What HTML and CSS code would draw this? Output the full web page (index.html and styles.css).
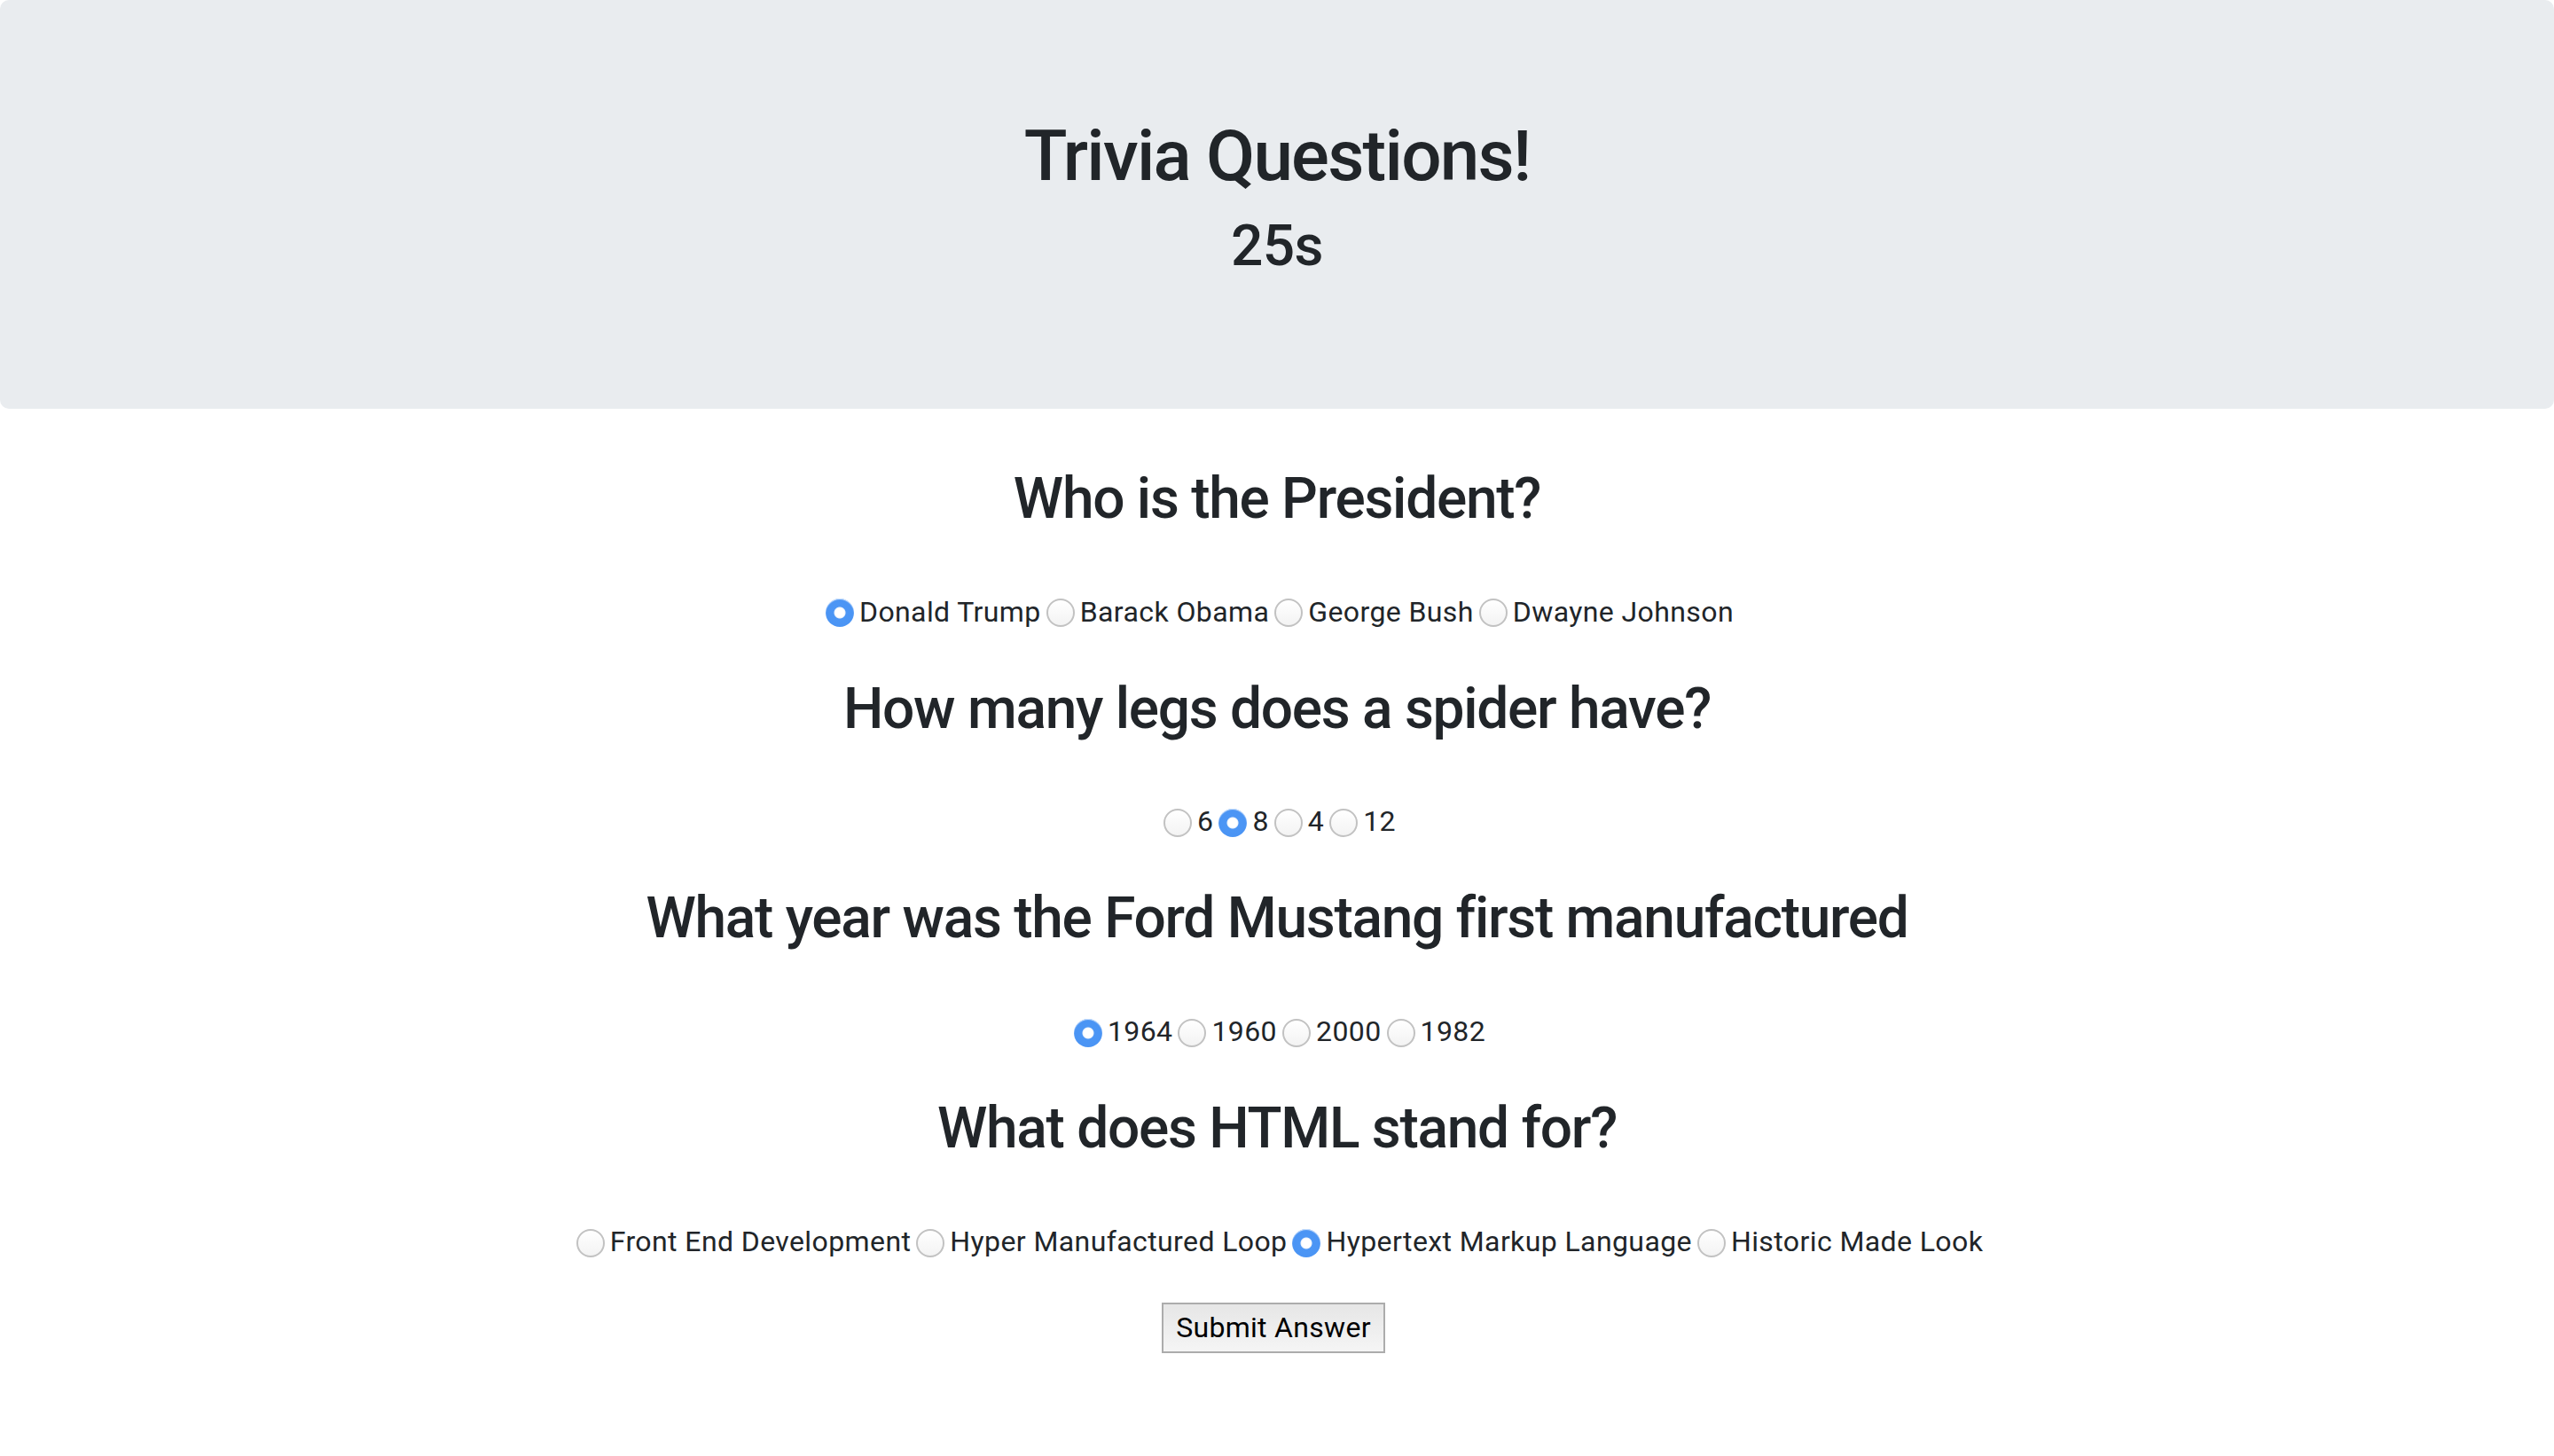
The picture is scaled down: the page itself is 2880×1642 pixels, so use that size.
FILE: index.html
```html
<!DOCTYPE html>
<html lang="en">
<head>
<meta charset="utf-8">
<title>Trivia Questions!</title>
<link rel="stylesheet" href="styles.css">
</head>
<body>
<header class="jumbotron">
  <h1 class="title">Trivia Questions!</h1>
  <h2 class="timer">25s</h2>
</header>
<main class="quiz">
  <section class="question">
    <h2 class="question-text">Who is the President?</h2>
    <div class="options"><label class="option"><input type="radio" name="q1" checked>Donald Trump</label><label class="option"><input type="radio" name="q1">Barack Obama</label><label class="option"><input type="radio" name="q1">George Bush</label><label class="option"><input type="radio" name="q1">Dwayne Johnson</label></div>
  </section>
  <section class="question">
    <h2 class="question-text">How many legs does a spider have?</h2>
    <div class="options"><label class="option"><input type="radio" name="q2">6</label><label class="option"><input type="radio" name="q2" checked>8</label><label class="option"><input type="radio" name="q2">4</label><label class="option"><input type="radio" name="q2">12</label></div>
  </section>
  <section class="question">
    <h2 class="question-text">What year was the Ford Mustang first manufactured</h2>
    <div class="options"><label class="option"><input type="radio" name="q3" checked>1964</label><label class="option"><input type="radio" name="q3">1960</label><label class="option"><input type="radio" name="q3">2000</label><label class="option"><input type="radio" name="q3">1982</label></div>
  </section>
  <section class="question">
    <h2 class="question-text">What does HTML stand for?</h2>
    <div class="options"><label class="option"><input type="radio" name="q4">Front End Development</label><label class="option"><input type="radio" name="q4">Hyper Manufactured Loop</label><label class="option"><input type="radio" name="q4" checked>Hypertext Markup Language</label><label class="option"><input type="radio" name="q4">Historic Made Look</label></div>
  </section>
  <div class="submit-row"><button class="submit" type="button">Submit Answer</button></div>
</main>
</body>
</html>
```

FILE: styles.css
```css
html, body {
  margin: 0;
  padding: 0;
  background: #ffffff;
}

body {
  font-family: Roboto, "Liberation Sans", Arial, sans-serif;
  font-size: 32px;
  line-height: 1.5;
  color: #212529;
}

.jumbotron {
  background: #e9ecef;
  border-radius: 10px;
  padding: 128px 64px;
  margin: 0 0 64px 0;
  text-align: center;
}

.title {
  font-size: 80px;
  font-weight: 500;
  line-height: 1.2;
  letter-spacing: -0.022em;
  margin: 0 0 16px 0;
}

.timer {
  font-size: 64px;
  font-weight: 500;
  line-height: 1.2;
  letter-spacing: -0.01em;
  margin: 0 0 16px 0;
}

.quiz {
  text-align: center;
}

.question-text {
  font-size: 64px;
  font-weight: 500;
  line-height: 1.2;
  letter-spacing: -0.02em;
  margin: 0 0 16px 0;
}

.options {
  padding: 48px 0;
  line-height: 48px;
  letter-spacing: 0.4px;
}

.option {
  white-space: nowrap;
}

.option input {
  -webkit-appearance: none;
  appearance: none;
  box-sizing: border-box;
  width: 32px;
  height: 32px;
  margin: 0 6px 0 6px;
  border-radius: 50%;
  border: 2px solid #c2c2c2;
  background: linear-gradient(#ffffff, #f3f3f3);
  box-shadow: inset 0 1px 1px rgba(255, 255, 255, 0.8);
  vertical-align: middle;
  position: relative;
  top: -1px;
}

.option input:checked {
  border: none;
  background: radial-gradient(circle at 50% 50%, #ffffff 0, #ffffff 5px, #eaf1fb 6px, #4c96f5 7px, #4a94f4 16px);
}

.submit-row {
  margin-top: -3px;
}

.submit {
  font-family: Roboto, "Liberation Sans", Arial, sans-serif;
  font-size: 32px;
  line-height: 37px;
  letter-spacing: 0.3px;
  color: #000000;
  padding: 8px 14px;
  margin-right: 8px;
  border: 2px solid #acacac;
  border-radius: 0;
  background: linear-gradient(#e6e6e6, #f5f5f5);
  cursor: pointer;
}
```
